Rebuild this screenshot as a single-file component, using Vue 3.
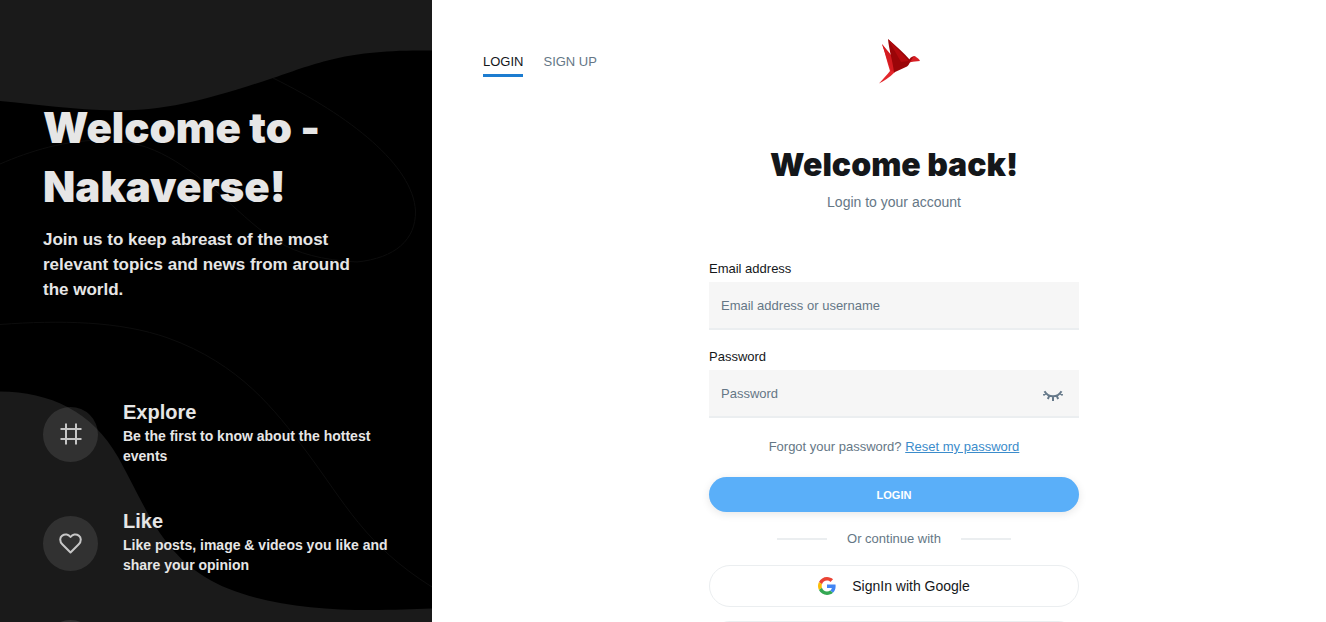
<script setup>
import { ref } from 'vue'

const email = ref('')
const password = ref('')
const showPassword = ref(false)

const features = [
  { icon: 'hash', title: 'Explore', text: 'Be the first to know about the hottest events' },
  { icon: 'heart', title: 'Like', text: 'Like posts, image & videos you like and share your opinion' },
  { icon: '', title: '', text: '' }
]
</script>

<template>
  <div class="page">
    <aside class="intro">
      <svg class="waves" viewBox="0 0 432 622" preserveAspectRatio="none" aria-hidden="true">
        <g fill="none" stroke="#0d0d0d" stroke-width="1">
          <path d="M273 78C350 116 413 165 415.500 211C416 240 395 258 357 262C285 258 265 235 222 196C185 166 155 141 105 140C65 140 30 151 0 164" />
          <path d="M0 324.500C60 320 120 321 168 338C240 364 275 410 306 451C345 503 365 545 432 587" />
        </g>
        <g fill="#1a1a1a">
          <path d="M0 0H432V50.500C345 49 315 64 270 79C207 100 165 111 115 110.500C75 110 35 104 0 101Z" />
          <path d="M0 391.500C50 392 92 411 118 457C146 508 160 549 205 577C245 602 310 610 370 610C395 610 412 609 432 608.500V622H0Z" />
        </g>
      </svg>
      <div class="intro-body">
        <h1 class="intro-title">Welcome to -<br />Nakaverse!</h1>
        <p class="intro-lead">Join us to keep abreast of the most relevant topics and news from around the world.</p>
        <ul class="features">
          <li v-for="(f, i) in features" :key="i" class="feature">
            <span class="bubble">
              <svg v-if="f.icon === 'hash'" width="24" height="24" viewBox="0 0 24 24" fill="none" stroke="#c6c6c6" stroke-width="2" aria-hidden="true">
                <path d="M7 1.500V22.500M17 1.500V22.500M1.500 7H22.500M1.500 17H22.500" />
              </svg>
              <svg v-else-if="f.icon === 'heart'" width="24" height="24" viewBox="0 0 24 24" fill="none" stroke="#c6c6c6" stroke-width="2" stroke-linejoin="round" aria-hidden="true">
                <path d="M11.500 21.500L3.500 13.500C.2 10.200.8 6.300 3.200 4.600C6 2.500 9.500 3.300 11.500 6C13.500 3.300 17 2.500 19.800 4.600C22.200 6.300 22.800 10.200 19.500 13.500Z" />
              </svg>
            </span>
            <div v-if="f.title" class="feature-text">
              <h2>{{ f.title }}</h2>
              <p>{{ f.text }}</p>
            </div>
          </li>
        </ul>
      </div>
    </aside>

    <main class="main">
      <header class="top">
        <nav class="tabs">
          <a href="#login" class="tab active">LOGIN</a>
          <a href="#signup" class="tab">SIGN UP</a>
        </nav>
        <svg class="logo" width="42" height="46" viewBox="0 0 42 46" role="img" aria-label="Nakaverse">
          <path fill="#e3262b" d="M3 6L16 25L16 34C10 40 5 43 0 45.500C4 41 8 37 11 33C8 24 6 14 3 6Z" />
          <path fill="#d41b20" d="M3 6L13 18L16 34L12 33Z" />
          <path fill="#9a0508" d="M9 1C17 8 25 15 31 22C31 25 30 27 28 28.500L15 34.500C14 24 10 12 9 1Z" />
          <path fill="#b30a0e" d="M9 1L30 23L22 24Z" />
          <path fill="#a3070b" d="M29 24C31 19 34 17 37 19L36 22L30 25Z" />
          <path fill="#d71f24" d="M35 18C38 19 40 21 41 23L31 24Z" />
        </svg>
      </header>

      <form class="form" @submit.prevent>
        <h1 class="form-title">Welcome back!</h1>
        <p class="form-sub">Login to your account</p>

        <label class="label" for="email">Email address</label>
        <input id="email" v-model="email" class="input" type="text" placeholder="Email address or username" />

        <label class="label" for="password">Password</label>
        <div class="field">
          <input id="password" v-model="password" class="input" :type="showPassword ? 'text' : 'password'" placeholder="Password" />
          <button type="button" class="eye" aria-label="Show password" @click="showPassword = !showPassword">
            <svg width="20" height="12" viewBox="0 0 20 12" fill="none" stroke="#66798a" stroke-width="2" aria-hidden="true">
              <path d="M1.500 1.300C5.500 8 14.500 8 18.500 1.300M3 3.500L.3 5.200M6.300 5.800L4.800 9M10 6.500V11M13.700 5.800L15.200 9M17 3.500L19.700 5.200" />
            </svg>
          </button>
        </div>

        <p class="forgot">Forgot your password? <a href="#reset">Reset my password</a></p>
        <button class="submit" type="submit">LOGIN</button>
        <div class="divider"><span>Or continue with</span></div>

        <button class="social" type="button">
          <svg width="18" height="18" viewBox="0 0 48 48" aria-hidden="true">
            <path fill="#ea4335" d="M24 9.500c3.540 0 6.710 1.220 9.210 3.600l6.850-6.850C35.900 2.380 30.470 0 24 0 14.620 0 6.510 5.380 2.560 13.220l7.980 6.190C12.430 13.720 17.740 9.500 24 9.500z" />
            <path fill="#4285f4" d="M46.980 24.550c0-1.570-.15-3.090-.38-4.550H24v9.020h12.940c-.58 2.960-2.260 5.480-4.780 7.180l7.730 6c4.510-4.180 7.090-10.360 7.090-17.650z" />
            <path fill="#fbbc05" d="M10.530 28.590c-.48-1.450-.76-2.990-.76-4.590s.27-3.140.76-4.590l-7.980-6.190C.92 16.460 0 20.120 0 24c0 3.880.92 7.540 2.560 10.780l7.970-6.190z" />
            <path fill="#34a853" d="M24 48c6.480 0 11.930-2.130 15.890-5.810l-7.730-6c-2.150 1.450-4.920 2.300-8.160 2.300-6.260 0-11.570-4.220-13.470-9.910l-7.980 6.190C6.510 42.620 14.620 48 24 48z" />
          </svg>
          <span>SignIn with Google</span>
        </button>
        <button class="social" type="button" aria-label="More sign in options"></button>
      </form>
    </main>
  </div>
</template>

<style>
body {
  background: #fff;
}
</style>

<style scoped>
* {
  box-sizing: border-box;
}

.page {
  display: flex;
  height: 100vh;
  overflow: hidden;
  font-family: "Liberation Sans", Arial, sans-serif;
  font-size: 13px;
  color: #14171a;
}

h1,
h2,
p,
ul {
  margin: 0;
  padding: 0;
}

button {
  font-family: inherit;
  cursor: pointer;
}

.intro {
  position: relative;
  flex: 0 0 432px;
  overflow: hidden;
  background: #000;
  color: #e6e6e6;
}

.waves {
  position: absolute;
  inset: 0;
  width: 100%;
  height: 100%;
}

.intro-body {
  position: relative;
  padding: 98px 43px 0;
}

.intro-title {
  font-family: Inter, sans-serif;
  font-size: 42px;
  font-weight: 900;
  line-height: 59px;
}

.intro-lead {
  max-width: 330px;
  margin-top: 11px;
  font-size: 17px;
  font-weight: 700;
  line-height: 25px;
}

.features {
  display: flex;
  flex-direction: column;
  gap: 45px;
  margin-top: 100px;
  list-style: none;
}

.feature {
  display: flex;
  align-items: center;
  gap: 25px;
}

.bubble {
  display: flex;
  flex: 0 0 55px;
  align-items: center;
  justify-content: center;
  height: 55px;
  border-radius: 50%;
  background: rgba(255, 255, 255, 0.1);
}

.feature h2 {
  margin-bottom: 4px;
  font-size: 20px;
  line-height: 20px;
}

.feature p {
  font-size: 14px;
  font-weight: 700;
  line-height: 20px;
}

.main {
  flex: 1;
  min-width: 0;
  padding: 38px 21px 0 51px;
}

.top {
  display: grid;
  grid-template-columns: 1fr auto 1fr;
  align-items: start;
}

.tabs {
  display: flex;
  gap: 20px;
  padding-top: 14px;
}

.tab {
  padding-bottom: 3px;
  border-bottom: 3px solid transparent;
  line-height: 19px;
  color: #657786;
  text-decoration: none;
}

.tab.active {
  border-color: #1c7cd0;
  color: #14171a;
}

.logo {
  margin-left: 12px;
}

.form {
  display: flex;
  flex-direction: column;
  max-width: 370px;
  margin: 56px auto 0;
}

.form-title {
  font-family: Inter, sans-serif;
  font-size: 32px;
  font-weight: 900;
  line-height: 50px;
  text-align: center;
  white-space: nowrap;
}

.form-sub {
  margin-bottom: 45px;
  font-size: 14px;
  line-height: 24px;
  color: #657786;
  text-align: center;
}

.label {
  line-height: 20px;
  margin-bottom: 3px;
}

.input {
  width: 100%;
  height: 48px;
  margin-bottom: 17px;
  padding: 0 12px;
  border: 0;
  border-bottom: 2px solid #ebeef0;
  border-radius: 0;
  background: #f6f6f6;
  font: inherit;
  color: inherit;
}

.input::placeholder {
  color: #657786;
  opacity: 1;
}

.field {
  position: relative;
}

.eye {
  position: absolute;
  top: 16px;
  right: 12px;
  display: flex;
  padding: 4px;
  border: 0;
  background: none;
}

.forgot {
  margin-top: 2px;
  line-height: 20px;
  color: #657786;
  text-align: center;
}

.forgot a {
  color: #3b8ccb;
}

.submit {
  height: 35px;
  margin-top: 20px;
  border: 0;
  border-radius: 18px;
  background: #5aaff9;
  box-shadow: 0 2px 8px rgba(0, 0, 0, 0.1);
  font-size: 11px;
  font-weight: 700;
  color: #fff;
}

.divider {
  display: flex;
  align-items: center;
  justify-content: center;
  gap: 20px;
  margin: 16px 0;
  line-height: 21px;
  color: #657786;
}

.divider::before,
.divider::after {
  content: "";
  width: 50px;
  height: 2px;
  background: #ebeef0;
}

.social {
  display: flex;
  flex: 0 0 42px;
  align-items: center;
  justify-content: center;
  gap: 16px;
  margin-bottom: 14px;
  border: 1px solid #ebeef0;
  border-radius: 21px;
  background: #fff;
  font-size: 14px;
  color: #14171a;
}
</style>
